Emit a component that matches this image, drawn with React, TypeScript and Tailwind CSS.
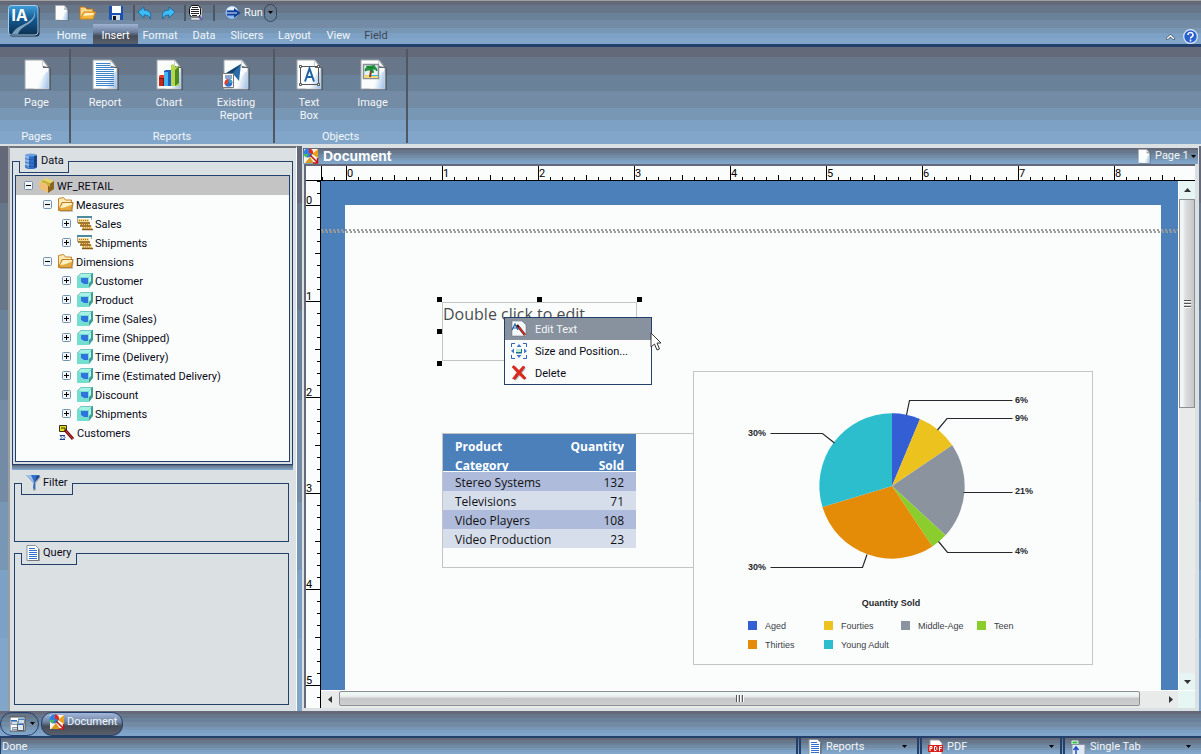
import React, { ReactNode } from "react";

const BANDS =
  "bg-[linear-gradient(#636978_10%,#677789_10%_29%,#6a8299_29%_45%,#748ba5_45%_63%,#7897b5_63%_75%,#7ca1c4_75%_87%,#82a6ca_87%)]";

function PageShape({ id }: { id: string }) {
  return (
    <>
      <defs>
        <linearGradient id={id} x1="0.3" y1="0.6" x2="1" y2="0.8">
          <stop offset="0.1" stopColor="#fbfdfc" />
          <stop offset="1" stopColor="#a4c3e8" />
        </linearGradient>
      </defs>
      <path d="M3 3h18l6 7v21H3z" fill="#3d4a5a" opacity="0.6" />
      <path d="M1 1h18l6 7v22H1z" fill="#fbfdfc" stroke="#a2a5aa" />
      <path d="M24.500 12c-3 1-5 4-7 8-2 2-4 3-8 3v6.500h15z" fill={`url(#${id})`} />
      <path d="M18 1l1 8h7z" fill="#3c424b" opacity="0.8" />
      <path d="M18 1l1 6 5 1z" fill="#fff" />
    </>
  );
}

function BigIcon({ id, children }: { id: string; children?: ReactNode }) {
  return (
    <svg viewBox="-1 0 28 32" className="h-8 w-7" aria-hidden="true">
      <PageShape id={id} />
      {children}
    </svg>
  );
}

function SmallPage({ id, className }: { id: string; className: string }) {
  return (
    <svg viewBox="0 0 28 32" className={className} aria-hidden="true">
      <PageShape id={id} />
    </svg>
  );
}

function LinedPage() {
  return (
    <svg viewBox="0 0 16 16" className="size-4 shrink-0" aria-hidden="true">
      <path d="M2 .500h8.500l3 3v12H2z" fill="#fff" stroke="#8b8f96" />
      <path d="M14 4v12H4" fill="none" stroke="#5b6068" />
      <path d="M4 3.500h6M4 5.500h8M4 7.500h8M4 9.500h8M4 11.500h8M4 13.500h8" stroke="#2f6fd0" />
    </svg>
  );
}

function DocumentIcon() {
  return (
    <svg viewBox="0 0 16 16" className="size-4 shrink-0" aria-hidden="true">
      <path d="M1 1h14v14H1z" fill="#fdf6e4" />
      <path d="M9 6l6-5v9z" fill="#e8a020" />
      <path d="M2 15l5-6 4 6z" fill="#d9981e" />
      <circle cx="5" cy="5" r="4.500" fill="#2f7fe0" />
      <path d="M6 5V0a5 5 0 0 1 4 6z" fill="#e8261c" />
      <path d="M.500 6h5l-2 3.500a5 5 0 0 1-3-3.500z" fill="#47c05a" />
      <path d="M7 7l7 7m.500-4v5H10" fill="none" stroke="#c01818" strokeWidth="1.500" />
    </svg>
  );
}

function Caret({ className = "" }: { className?: string }) {
  return (
    <svg viewBox="0 0 5 3" className={`h-[3px] w-[5px] shrink-0 ${className}`} aria-hidden="true">
      <path d="M0 0h5L2.500 3z" fill="#000" />
    </svg>
  );
}

function Folder() {
  return (
    <svg viewBox="0 0 16 16" className="size-4 shrink-0" aria-hidden="true">
      <path d="M.500 13V1.500l5-1 2 2.500h6v3" fill="#fbe9b8" stroke="#c88428" />
      <path d="M2 15h13l.500-10H6L3 7z" fill="#8c8f96" opacity="0.500" />
      <path d="M.500 13.500L4 5.500h11l-1.500 8z" fill="#e2ab3f" stroke="#c07c1e" />
      <path d="M2 11l3-5h9l-.500 2c-3 0-5 3-11.500 3z" fill="#fdf0c4" />
    </svg>
  );
}

function Measure() {
  return (
    <svg viewBox="0 0 16 16" className="size-4 shrink-0" aria-hidden="true">
      <path d="M0 1h15" stroke="#16657f" strokeWidth="1.500" />
      <path d="M.500 2v5M14.500 2v2" stroke="#9aa8ae" />
      <path d="M1 3h11v4H1z" fill="#f5d78e" />
      <path d="M3 7h10v3H3z" fill="#f0c878" />
      <path d="M5 10h10v3H5z" fill="#f5d78e" />
      <path d="M1 7h12M3 10h11M5 13.500h11" stroke="#8a5a16" strokeWidth="1.500" />
      <path d="M2 4.500h9M4 8.500h8M6 12h8" stroke="#a8741e" strokeDasharray="1 1" />
    </svg>
  );
}

function Cube() {
  return (
    <svg viewBox="0 0 16 16" className="size-4 shrink-0" aria-hidden="true">
      <path d="M0 4l4-4h12v10l-4 5H0z" fill="#3f9f97" />
      <path d="M1 4l3-3.500h11L12 4z" fill="#a6f2e6" />
      <path d="M0 4h12v11H0z" fill="#74dfcf" />
      <path d="M4 5h7v6H4z" fill="#2f74dc" />
      <path d="M4 9l3 2H4z" fill="#7fe0f0" />
      <path d="M12 4l2-2v6l-2 2z" fill="#b9f2ea" />
    </svg>
  );
}

function Box() {
  return (
    <svg viewBox="0 0 16 16" className="size-4 shrink-0" aria-hidden="true">
      <path d="M0 4l7-4 8 3-6 4z" fill="#e6d76a" />
      <path d="M0 4l9 3v8l-8-4z" fill="#f0bf74" />
      <path d="M9 7l6-4v8l-6 4z" fill="#8a6420" />
      <path d="M4 2l7 3v4l-3-2v-1L2 4z" fill="#c9ae3a" />
    </svg>
  );
}

function NamedSet() {
  return (
    <svg viewBox="0 0 16 16" className="size-4 shrink-0" aria-hidden="true">
      <path d="M.500.500h7v6h-7z" fill="#e6dc28" stroke="#33330f" />
      <path d="M2 3h4v3" fill="none" stroke="#33330f" />
      <path d="M6 5l8 9" stroke="#6b0f12" strokeWidth="3" />
      <path d="M7 6l7 8" stroke="#e23a3a" strokeWidth="1" />
      <path d="M1 10.500h5M1 14.500h5M1 10.500l2 2-2 2M4 10.500l2 2-2 2" fill="none" stroke="#1d3f8f" />
    </svg>
  );
}

function Toggle({ open }: { open: boolean }) {
  return (
    <svg viewBox="0 0 9 9" className="size-[9px]" aria-hidden="true">
      <rect x="0.500" y="0.500" width="8" height="8" rx="1" fill="#f2f5f8" stroke="#7591b0" />
      <path d={open ? "M2 4.500h5" : "M2 4.500h5M4.500 2v5"} stroke="#000" />
    </svg>
  );
}

const tree: { depth: number; open: boolean | null; icon: ReactNode; label: string }[] = [
  { depth: 0, open: true, icon: <Box />, label: "WF_RETAIL" },
  { depth: 1, open: true, icon: <Folder />, label: "Measures" },
  { depth: 2, open: false, icon: <Measure />, label: "Sales" },
  { depth: 2, open: false, icon: <Measure />, label: "Shipments" },
  { depth: 1, open: true, icon: <Folder />, label: "Dimensions" },
  { depth: 2, open: false, icon: <Cube />, label: "Customer" },
  { depth: 2, open: false, icon: <Cube />, label: "Product" },
  { depth: 2, open: false, icon: <Cube />, label: "Time (Sales)" },
  { depth: 2, open: false, icon: <Cube />, label: "Time (Shipped)" },
  { depth: 2, open: false, icon: <Cube />, label: "Time (Delivery)" },
  { depth: 2, open: false, icon: <Cube />, label: "Time (Estimated Delivery)" },
  { depth: 2, open: false, icon: <Cube />, label: "Discount" },
  { depth: 2, open: false, icon: <Cube />, label: "Shipments" },
  { depth: 1, open: null, icon: <NamedSet />, label: "Customers" },
];

const INDENT = ["pl-[8px]", "pl-[27px]", "pl-[46px]"];

function Tree() {
  return (
    <ul role="tree" aria-label="Data" className="h-full">
      {tree.map((n, i) => (
        <li
          key={i}
          role="treeitem"
          aria-level={n.depth + 1}
          aria-selected={i === 0}
          className={`flex h-[19px] items-center ${INDENT[n.depth]} ${i === 0 ? "bg-[#c4c4c4]" : ""}`}
        >
          {n.open !== null ? (
            <button className="mr-[6px]" aria-label={n.open ? "Collapse" : "Expand"}>
              <Toggle open={n.open} />
            </button>
          ) : (
            <span className="w-4" />
          )}
          {n.icon}
          <span className="ml-[2px] pt-[2px] whitespace-nowrap">{n.label}</span>
        </li>
      ))}
    </ul>
  );
}

function Panel({ title, icon, className, children }: { title: string; icon: ReactNode; className: string; children?: ReactNode }) {
  return (
    <section className={`flex flex-col border border-[#233f6c] ${className}`}>
      <h2 className="-mt-px ml-[6px] flex h-3 w-max items-end border-x border-b border-[#233f6c] bg-[#dbe0e3] pr-1 pl-[3px] font-normal">
        <span className="flex h-[23px] items-center gap-[2px]">
          {icon}
          {title}
        </span>
      </h2>
      {children}
    </section>
  );
}

const tabs = [
  { label: "Home", w: "w-[43px]" },
  { label: "Insert", w: "w-[45px]" },
  { label: "Format", w: "w-[44px]" },
  { label: "Data", w: "w-[44px]" },
  { label: "Slicers", w: "w-[42px]" },
  { label: "Layout", w: "w-[53px]" },
  { label: "View", w: "w-[35px]" },
  { label: "Field", w: "w-[40px]" },
];

function Separator() {
  return <span className="h-4 w-[2px] bg-[#4f5763]" />;
}

function TitleBar() {
  return (
    <header className={`flex h-11 shrink-0 items-stretch border-t border-[#a0a0a0] ${BANDS}`}>
      <svg viewBox="0 0 34 34" className="mt-[3px] ml-[7px] h-[34px] w-[34px]" role="img" aria-label="InfoAssist">
        <defs>
          <linearGradient id="logo" x1="0" y1="0" x2="0" y2="1">
            <stop offset="0" stopColor="#3f9fdc" />
            <stop offset="0.450" stopColor="#155a92" />
            <stop offset="1" stopColor="#0d3050" />
          </linearGradient>
        </defs>
        <rect x="2.500" y="2.500" width="30" height="30" rx="3" fill="#1c2c40" />
        <rect x="1.500" y="1.500" width="29.500" height="29.500" rx="3" fill="url(#logo)" stroke="#a5cdea" />
        <path d="M24 5c6 4 3 9-3 13-7 4-13 6-16 12h6c2-5 7-8 12-11 6-5 7-10 1-14z" fill="#a9c9e2" opacity="0.700" />
        <text x="4" y="17" fontSize="16" fontWeight="700" fill="#fff" className="font-['Open_Sans',sans-serif]">
          IA
        </text>
      </svg>
      <div className="flex flex-1 flex-col">
        <div className="flex h-[23px] items-center pl-[14px]">
          <button aria-label="New">
            <SmallPage id="new" className="h-4 w-[14px]" />
          </button>
          <button className="ml-[10px]" aria-label="Open">
            <svg viewBox="0 0 17 16" className="h-4 w-[17px]">
              <path d="M1 14V2h5l2 2h6v3" fill="#f8d88c" stroke="#b96d14" />
              <path d="M1 14l4-7h11.500L14 14z" fill="#f3b63c" stroke="#d88a1c" />
              <path d="M4 11l2-3h9l-1 2z" fill="#fff0c0" />
            </svg>
          </button>
          <button className="ml-[13px]" aria-label="Save">
            <svg viewBox="0 0 15 16" className="h-4 w-[15px]">
              <path d="M0 1h14v14H1l-1-1z" fill="#1c50b0" />
              <path d="M3 1h9v7H3z" fill="#fff" />
              <path d="M3 10h8v5H3z" fill="#d7dde5" />
              <path d="M4 11h3v4H4z" fill="#12151c" />
            </svg>
          </button>
          <span className="ml-[9px] flex">
            <Separator />
          </span>
          <button className="ml-[3px]" aria-label="Undo">
            <svg viewBox="0 0 14 14" className="size-[14px]">
              <path d="M0 6l6-5v3c6 0 8 4 6 9 0-3-3-4-6-4v3z" fill="#3cbcf4" stroke="#14609a" strokeWidth="0.800" />
            </svg>
          </button>
          <button className="ml-[9px]" aria-label="Redo">
            <svg viewBox="0 0 14 14" className="size-[14px]">
              <path d="M14 6L8 1v3c-6 0-8 4-6 9 0-3 3-4 6-4v3z" fill="#3cbcf4" stroke="#14609a" strokeWidth="0.800" />
            </svg>
          </button>
          <span className="ml-[9px] flex">
            <Separator />
          </span>
          <button className="ml-[2px]" aria-label="Preview">
            <svg viewBox="0 0 16 16" className="size-4">
              <path d="M3 3h11v12H3z" fill="#dfe3e8" stroke="#666" strokeWidth="0.500" />
              <path d="M10 10l4 5" stroke="#6a5fae" strokeWidth="2.500" />
              <path d="M3.500.500h7l2 3v6l-2 2.500h-7l-2-2.500v-6z" fill="#fff" stroke="#111" />
              <path d="M4 2.500h6M3 4.500h8M3 6.500h8M3 8.500h8M4 10.500h5" stroke="#222" />
            </svg>
          </button>
          <span className="ml-[9px] flex">
            <Separator />
          </span>
          <button className="ml-[10px] flex items-center gap-[3px] text-[#f2f6f8]">
            <svg viewBox="0 0 16 16" className="size-4" aria-hidden="true">
              <circle cx="7" cy="7.500" r="6.500" fill="#8fbcf0" />
              <path d="M1.500 5a6 6 0 0 1 11 0z" fill="#e8f3fd" />
              <path d="M2 5.500h7V3l6.500 5L9 13v-2.500H2z" fill="#123f9a" />
              <path d="M2 8h10" stroke="#dfeefc" />
            </svg>
            Run
          </button>
          <button aria-label="Run options" className="ml-px flex h-[18px] w-[13px] items-center justify-center rounded-full border border-[#31465f]">
            <Caret />
          </button>
        </div>
        <nav className="flex h-5 items-stretch pl-[9px]">
          {tabs.map((t) => (
            <button
              key={t.label}
              className={`${t.w} pt-1 text-center ${
                t.label === "Insert"
                  ? "bg-[linear-gradient(#9fb3d3,#6c7f9f_40%,#454c58_60%,#59606c)] text-white"
                  : t.label === "Field"
                    ? "text-[#3f4654]"
                    : "text-[#f2f6f8]"
              }`}
            >
              {t.label}
            </button>
          ))}
        </nav>
      </div>
      <div className="flex items-end gap-2 pr-[3px]">
        <button aria-label="Collapse ribbon" className="mb-[4px]">
          <svg viewBox="0 0 9 6" className="h-[6px] w-[9px]">
            <path d="M.500 5.500l4-4 4 4" fill="none" stroke="#2f3f55" strokeWidth="2.500" />
            <path d="M1 5l3.500-3.500L8 5" fill="none" stroke="#fff" strokeWidth="1.500" />
          </svg>
        </button>
        <button aria-label="Help">
          <svg viewBox="0 0 15 15" className="size-[15px]">
            <circle cx="7.500" cy="7.500" r="6.800" fill="#2a60cf" stroke="#dfe9f7" strokeWidth="1.200" />
            <path d="M5 6a2.500 2.300 0 1 1 3.500 2c-.800.400-1 .800-1 1.500M7.500 10.500v2" fill="none" stroke="#fff" strokeWidth="1.500" />
          </svg>
        </button>
      </div>
    </header>
  );
}

function RibbonButton({ label, w = "w-16", children }: { label: string; w?: string; children: ReactNode }) {
  return (
    <button className={`flex flex-col items-center text-[#f2f6f8] ${w}`}>
      {children}
      <span className="mt-[5px] w-10 leading-[13px]">{label}</span>
    </button>
  );
}

function RibbonGroup({ label, pad = "px-[2px]", children }: { label: string; pad?: string; children: ReactNode }) {
  return (
    <section className={`mt-[2px] mb-px flex flex-col justify-between border-r-2 border-[#4f5763] pt-[10px] ${pad}`}>
      <div className="flex">{children}</div>
      <h2 className="text-center leading-[13px] font-normal text-[#f2f6f8]">{label}</h2>
    </section>
  );
}

function Ribbon() {
  return (
    <div className={`flex h-[100px] shrink-0 border-t-[3px] border-[#233f6c] ${BANDS}`}>
      <RibbonGroup label="Pages" pad="pl-1">
        <RibbonButton label="Page" w="w-[65px]">
          <BigIcon id="p1" />
        </RibbonButton>
      </RibbonGroup>
      <RibbonGroup label="Reports">
        <RibbonButton label="Report">
          <BigIcon id="p2">
            <path
              d="M4 4.500h14M4 6.500h14M4 8.500h18M4 10.500h18M4 12.500h18M4 14.500h18M4 16.500h18M4 18.500h18M4 20.500h18M4 22.500h18M4 24.500h18M4 26.500h18"
              stroke="#3f83c8"
            />
          </BigIcon>
        </RibbonButton>
        <RibbonButton label="Chart">
          <BigIcon id="p3">
            <path d="M3 17l2-1h5v11H3z" fill="#7d1512" />
            <path d="M3 17l2-1h4v3H3z" fill="#e83a22" />
            <path d="M3 20h4v7H3z" fill="#c3271d" />
            <path d="M8 12l2-1h6v16H8z" fill="#1f5fc0" />
            <path d="M8 13h4v14H8z" fill="#45b8f4" />
            <path d="M15 6l2-1 2 3 4-1v20h-8z" fill="#b5d84a" />
            <path d="M19 11l4-4v17l-4 3z" fill="#4f8a1e" />
          </BigIcon>
        </RibbonButton>
        <RibbonButton label="Existing Report" w="w-[70px]">
          <BigIcon id="p4">
            <path d="M18 5L16 22l-5-6-8-2z" fill="#2a6ba8" />
            <path d="M18 5L2 15l6 1z" fill="#16466f" />
            <path d="M-.500 14.500h11v14h-11z" fill="#fff" stroke="#777" />
            <path d="M2 17h7M2 19h7" stroke="#1d4f9a" />
            <circle cx="5.500" cy="24" r="3.800" fill="#2f6fd0" />
            <path d="M5.500 24v-4a4 4 0 0 1 4 4z" fill="#35a0d0" />
            <path d="M5.500 24l-3.500 2a4 4 0 0 1 3.500-6z" fill="#e0452c" />
          </BigIcon>
        </RibbonButton>
      </RibbonGroup>
      <RibbonGroup label="Objects">
        <RibbonButton label="Text Box" w="w-16 px-4">
          <BigIcon id="p5">
            <path d="M4.500 7.500h18v18h-18z" fill="none" stroke="#555" />
            <path d="M3.500 6.500h2v2h-2zM21.500 6.500h2v2h-2zM3.500 24.500h2v2h-2zM21.500 24.500h2v2h-2z" fill="#fff" stroke="#555" />
            <path d="M9 22.500l4.500-13 4.500 13M10.500 18h6" fill="none" stroke="#1f62a8" strokeWidth="2" />
          </BigIcon>
        </RibbonButton>
        <RibbonButton label="Image" w="w-[63px]">
          <BigIcon id="p6">
            <path d="M3.500 5.500h15v14h-15z" fill="#dff2f6" stroke="#8a8f96" strokeWidth="1.500" />
            <path d="M4 16h14v3H4z" fill="#f0d878" />
            <path d="M11 16.500h7" stroke="#35b8e0" />
            <path d="M10 18l1.500-9" stroke="#8a3f18" strokeWidth="2" />
            <path d="M5 12c0-4 3-5 6-3 3-3 6-1 6 3-2-2-3-2-5-2 1 1 2 2 1 4-1-2-2-3-3-3-2 0-3 0-5 1zM6 7l5 2 4-3" fill="#1fa03c" stroke="#147028" strokeWidth="0.800" />
          </BigIcon>
        </RibbonButton>
      </RibbonGroup>
    </div>
  );
}

const range = (n: number) => Array.from({ length: n }, (_, i) => i);

const tickLength = (n: number) => (n % 8 === 0 ? 15 : n % 4 === 0 ? 5 : 3);

function HorizontalRuler() {
  return (
    <svg className="h-[15px] min-w-0 flex-1 border-b border-l border-black bg-[#fbfdfc]" aria-hidden="true">
      {range(72).map((i) => (
        <path key={i} d={`M${0.5 + i * 12} 14v-${tickLength(i - 2)}`} stroke="#000" />
      ))}
      {range(9).map((i) => (
        <text key={i} x={25 + i * 96} y="11" fontSize="11">
          {i}
        </text>
      ))}
    </svg>
  );
}

function VerticalRuler() {
  return (
    <svg className="w-[15px] shrink-0 border-r border-black bg-[#fbfdfc]" aria-hidden="true">
      {range(100).map((i) => (
        <path key={i} d={`M14 ${0.5 + i * 12}h-${tickLength(i - 2)}`} stroke="#000" />
      ))}
      {range(6).map((i) => (
        <text key={i} x="0" y={23 + i * 96} fontSize="11">
          {i}
        </text>
      ))}
    </svg>
  );
}

const legend = [
  { x: 748, y: 621, c: "#345ed4", t: "Aged" },
  { x: 824, y: 621, c: "#ecc31e", t: "Fourties" },
  { x: 901, y: 621, c: "#8b939f", t: "Middle-Age" },
  { x: 977, y: 621, c: "#8ccd2e", t: "Teen" },
  { x: 748, y: 640, c: "#e48b07", t: "Thirties" },
  { x: 824, y: 640, c: "#2dbecd", t: "Young Adult" },
];

const shares = [
  { x: 1015, y: 403, t: "6%" },
  { x: 1015, y: 421, t: "9%" },
  { x: 1015, y: 494, t: "21%" },
  { x: 1015, y: 554, t: "4%" },
  { x: 748, y: 436, t: "30%" },
  { x: 748, y: 570, t: "30%" },
];

function PieChart() {
  return (
    <svg viewBox="694 372 398 292" className="h-[292px] w-[398px] font-['Liberation_Sans',sans-serif]" role="img" aria-label="Quantity Sold by age group">
      <path d="M892 486V413.300A72.700 72.700 0 0 1 920 419z" fill="#345ed4" />
      <path d="M892 486L920 419A72.700 72.700 0 0 1 952.200 445.300z" fill="#ecc31e" />
      <path d="M892 486L952.200 445.300A72.700 72.700 0 0 1 945.500 535.200z" fill="#8b939f" />
      <path d="M892 486L945.500 535.200A72.700 72.700 0 0 1 932.400 546.400z" fill="#8ccd2e" />
      <path d="M892 486L932.400 546.400A72.700 72.700 0 0 1 822.400 506.900z" fill="#e48b07" />
      <path d="M892 486L822.400 506.900A72.700 72.700 0 0 1 892 413.300z" fill="#2dbecd" />
      <path
        d="M906.500 415l3-14.500h103M937.500 430l9.500-11.500h65.500M963.500 492.500h49M938.500 541.500l9 11h65M834.500 443l-12-9.500h-52M867 554.500l-4.500 13h-92"
        fill="none"
        stroke="#26282c"
        strokeWidth="1.200"
      />
      {shares.map((s, i) => (
        <text key={i} x={s.x} y={s.y} fontSize="9" fontWeight="700" fill="#26282c">
          {s.t}
        </text>
      ))}
      <text x="891" y="606" fontSize="9" fontWeight="700" textAnchor="middle" fill="#26282c">
        Quantity Sold
      </text>
      {legend.map((l) => (
        <g key={l.t}>
          <rect x={l.x} y={l.y} width="9" height="9" fill={l.c} />
          <text x={l.x + 17} y={l.y + 8} fontSize="9" fill="#3c4048">
            {l.t}
          </text>
        </g>
      ))}
    </svg>
  );
}

const rows = [
  ["Stereo Systems", "132"],
  ["Televisions", "71"],
  ["Video Players", "108"],
  ["Video Production", "23"],
];

const HANDLES = [
  "-left-[6px] -top-[6px]",
  "left-[94px] -top-[6px]",
  "left-[194px] -top-[6px]",
  "-left-[6px] top-[26px]",
  "-left-[6px] top-[58px]",
];

function ContextMenu() {
  const item = "flex h-[22px] w-full items-center gap-[8px] pl-[6px] text-left";
  const text = "pt-[2px]";
  return (
    <div role="menu" className="absolute top-[136px] left-[183px] w-[148px] border border-[#233f6c] bg-[#fbfdfc]">
      <button role="menuitem" className={`${item} bg-[#88929f] text-[#f2f6f8]`}>
        <svg viewBox="0 0 16 16" className="size-4" aria-hidden="true">
          <path d="M1 0h10l4 4v11H1z" fill="#f6f9fc" stroke="#5c6570" strokeWidth="0.500" />
          <path d="M1 9L4 3l3 6M2 7h4" fill="none" stroke="#1f5fa8" strokeWidth="1.200" />
          <path d="M6 4l8 10" stroke="#401214" strokeWidth="2.500" />
          <path d="M8 6l6 8" stroke="#d8302a" strokeWidth="1.500" />
        </svg>
        <span className={text}>Edit Text</span>
      </button>
      <button role="menuitem" className={item}>
        <svg viewBox="0 0 16 16" className="size-4" aria-hidden="true">
          <path d="M.500 4V.500H4M12 .500h3.500V4M.500 12v3.500H4M12 15.500h3.500V12" fill="none" stroke="#2f62c0" strokeWidth="1" />
          <path d="M8 1l2.500 3h-5zM8 15l2.500-3h-5zM0 8l3-2.500v5zM16 8l-3-2.500v5z" fill="#3f78cc" />
          <path d="M5 6h6v4.500H5z" fill="#1f6f8f" />
          <path d="M5 6h5v3H5z" fill="#bfe8d0" />
        </svg>
        <span className={text}>Size and Position...</span>
      </button>
      <button role="menuitem" className={item}>
        <svg viewBox="0 0 16 16" className="size-4" aria-hidden="true">
          <path d="M4 3l11 11M14 3L4 15" stroke="#7a8088" strokeWidth="2" opacity="0.500" />
          <path d="M1 2l2-1.500 5 5 4-4.500 2 1-4 5.500 5 5.500-2 1.500-5-5-4 5-2.500-1L6 7.500z" fill="#e0281c" stroke="#b01810" strokeWidth="0.500" />
        </svg>
        <span className={text}>Delete</span>
      </button>
    </div>
  );
}

function MarginLine() {
  return (
    <svg className="absolute inset-x-0 top-12 h-1 w-full" aria-hidden="true">
      <defs>
        <pattern id="weave" width="4" height="4" patternUnits="userSpaceOnUse">
          <path d="M0 0h2v2H0zM1 2h2v2H1z" fill="#9b9b9b" />
        </pattern>
      </defs>
      <rect width="100%" height="4" fill="url(#weave)" />
    </svg>
  );
}

function Canvas() {
  return (
    <div className="relative min-w-0 flex-1 overflow-hidden bg-[#4b80bb]">
      <div className="absolute top-6 bottom-0 left-6 w-[816px] bg-[#fbfdfc]" />
      <MarginLine />

      <div className="absolute top-[121px] left-[121px] h-[59px] w-[195px] border border-[#c4c4c4] font-['Open_Sans',sans-serif] text-base leading-[22px] whitespace-nowrap text-[#4a4d50]">
        Double click to edit
        {HANDLES.map((h) => (
          <span key={h} className={`absolute size-[5px] bg-black ${h}`} />
        ))}
      </div>

      <div className="absolute top-[252px] left-[121px] h-[135px] w-[600px] border border-[#c4c4c4] font-['Open_Sans',sans-serif] text-[12px]">
        <table className="w-[193px] border-collapse text-[#111]">
          <thead>
            <tr className="border-b border-white bg-[#4b80bb] align-top leading-[19px] font-semibold text-white">
              <th className="pt-[3px] pl-3 text-left align-top">
                <div className="h-[34px] w-16 overflow-hidden">Product Category</div>
              </th>
              <th className="pt-[3px] pr-3 text-right align-top">
                <div className="ml-auto h-[34px] w-16 overflow-hidden">Quantity Sold</div>
              </th>
            </tr>
          </thead>
          <tbody>
            {rows.map(([name, qty]) => (
              <tr key={name} className="leading-[16px] odd:bg-[#aebbda] even:bg-[#d6deec]">
                <td className="pt-[3px] pl-3">{name}</td>
                <td className="pt-[3px] pr-3 text-right">{qty}</td>
              </tr>
            ))}
          </tbody>
        </table>
      </div>

      <div className="absolute top-[190px] left-[372px] border border-[#c4c4c4] bg-[#fbfdfc]">
        <PieChart />
      </div>

      <ContextMenu />
      <svg viewBox="0 0 12 20" className="absolute top-[151px] left-[329px] h-5 w-3" aria-hidden="true">
        <path d="M1 1v14l3.500-3 2.500 6 2.500-1-2.500-6H11z" fill="#fff" stroke="#333" />
      </svg>
    </div>
  );
}

function ArrowGlyph({ d }: { d: string }) {
  return (
    <svg viewBox="0 0 7 7" className="size-[7px]" aria-hidden="true">
      <path d={d} fill="#333" />
    </svg>
  );
}

function Workspace() {
  return (
    <main className="mr-[2px] flex min-w-0 flex-1 flex-col bg-[#dbe0e3]">
      <div className={`mt-[2px] mr-px ml-px flex h-4 items-center ${BANDS}`}>
        <DocumentIcon />
        <h1 className="ml-1 flex-1 font-['Liberation_Sans',sans-serif] text-[14px] leading-4 font-bold text-white">Document</h1>
        <SmallPage id="pg" className="h-[15px] w-[13px]" />
        <label className="ml-1 flex items-center text-[#f2f6f8]">
          <select aria-label="Current page" className="w-[36px] appearance-none bg-transparent leading-4">
            <option>Page 1</option>
          </select>
          <Caret className="mr-[2px]" />
        </label>
      </div>
      <div className="mr-1 mb-[3px] ml-[2px] flex min-h-0 flex-1 flex-col border-t-2 border-l-2 border-[#636978]">
        <div className="flex shrink-0 bg-[#fbfdfc]">
          <span className="w-[15px] border-b border-black" />
          <HorizontalRuler />
        </div>
        <div className="flex min-h-0 flex-1">
          <VerticalRuler />
          <div className="flex min-w-0 flex-1 flex-col">
            <div className="flex min-h-0 flex-1">
              <Canvas />
              <div className="flex w-[17px] shrink-0 flex-col border-l border-white bg-[#e9ebeb]">
                <button aria-label="Scroll up" className="flex h-[18px] items-center justify-center bg-[#e6f4f3]">
                  <ArrowGlyph d="M0 5l3.500-4L7 5z" />
                </button>
                <div className="flex h-[209px] items-center justify-center border border-[#8c8f92] bg-[linear-gradient(90deg,#f2f5f5_20%,#dcdedf_40%,#c4c6c8)]">
                  <span className="h-2 w-[7px] bg-[repeating-linear-gradient(#555_0_1px,#fff_1px_2px,#ccc_2px_3px)]" />
                </div>
                <button aria-label="Scroll down" className="mt-auto flex h-[17px] items-center justify-center bg-[#e6f4f3]">
                  <ArrowGlyph d="M0 2l3.500 4L7 2z" />
                </button>
              </div>
            </div>
            <div className="flex h-[18px] shrink-0 border-t border-white bg-[#e9ebeb]">
              <button aria-label="Scroll left" className="flex w-[18px] items-center justify-center">
                <ArrowGlyph d="M5 0L1 3.500 5 7z" />
              </button>
              <div className="mb-[2px] flex flex-1 items-center justify-center rounded-[2px] border border-[#8c8f92] bg-[linear-gradient(#eef6f4_20%,#e2e4e4_40%,#c4c6c8_50%,#cdcfd0)]">
                <span className="h-[7px] w-2 bg-[repeating-linear-gradient(90deg,#555_0_1px,#fff_1px_2px,#ccc_2px_3px)]" />
              </div>
              <button aria-label="Scroll right" className="ml-[23px] flex w-[15px] items-center justify-center">
                <ArrowGlyph d="M2 0l4 3.500L2 7z" />
              </button>
              <span className="w-[17px] bg-[#e6f6f3]" />
            </div>
          </div>
        </div>
      </div>
    </main>
  );
}

function Sidebar() {
  return (
    <aside className="ml-2 flex w-[289px] shrink-0 flex-col border-t-2 border-r border-l-2 border-t-[#70757c] border-r-white border-l-[#9a9ea3] bg-[#dbe0e3] pr-[3px] pb-[6px]">
      <Panel
        title="Data"
        className="mt-[13px] ml-[2px] h-[304px]"
        icon={
          <svg viewBox="0 0 16 16" className="size-4" aria-hidden="true">
            <path d="M2 2h12v12a6 2 0 0 1-12 0z" fill="#2f6fc8" />
            <path d="M2 2h4v13l-4-2z" fill="#8fb8ea" />
            <path d="M11 2h3v12l-3 1z" fill="#173f86" />
            <path d="M2 5.500c3 1.500 9 1.500 12 0M2 9c3 1.500 9 1.500 12 0M2 12.500c3 1.500 9 1.500 12 0" fill="none" stroke="#2a5598" strokeWidth="0.700" />
            <ellipse cx="8" cy="2" rx="6" ry="1.500" fill="#6f9fe0" />
          </svg>
        }
      >
        <div className="mx-[2px] mt-[2px] mb-[2px] flex-1 border border-[#233f6c] bg-[#fbfdfc]">
          <Tree />
        </div>
      </Panel>
      <div className={`ml-[2px] h-[5px] shrink-0 ${BANDS}`} />
      <Panel
        title="Filter"
        className="mt-[13px] mr-1 ml-1 h-[59px]"
        icon={
          <svg viewBox="0 0 16 16" className="size-4" aria-hidden="true">
            <path d="M3 2h13l-5 6v7l-3 1V8z" fill="#777" opacity="0.500" />
            <path d="M1 0h14L10 7v8l-2-2V7z" fill="#2f6fc8" />
            <path d="M1 0h5l3 7v6L8 7z" fill="#9cc0ea" />
            <path d="M12 1h3L10 7z" fill="#163f8a" />
          </svg>
        }
      />
      <Panel title="Query" className="mt-[11px] mr-1 ml-1 flex-1" icon={<LinedPage />} />
    </aside>
  );
}

function StatusSelect({ label, icon, w, caret = "mr-[10px]" }: { label: string; icon: ReactNode; w: string; caret?: string }) {
  return (
    <label className={`ml-px flex shrink-0 items-center border-l-2 border-[#233f6c] pt-px pl-[6px] ${w}`}>
      {icon}
      <select aria-label={label} className="ml-[3px] flex-1 appearance-none bg-transparent pt-px leading-4">
        <option>{label}</option>
      </select>
      <Caret className={caret} />
    </label>
  );
}

export default function App() {
  return (
    <div className="flex h-screen min-h-[600px] flex-col overflow-hidden bg-[#dbe0e3] font-['Roboto','Noto_Sans',sans-serif] text-[11px] leading-[14px] text-[#0a0a18]">
      <TitleBar />
      <Ribbon />
      <div className={`mt-[2px] flex min-h-0 flex-1 ${BANDS}`}>
        <Sidebar />
        <div className="w-[5px] shrink-0" />
        <Workspace />
      </div>
      <div className={`flex h-[25px] shrink-0 items-center gap-[2px] ${BANDS}`}>
        <button aria-label="Windows" className="flex h-6 w-[39px] items-center justify-end gap-1 rounded-full border border-[#233f6c] pr-[3px]">
          <svg viewBox="0 0 16 16" className="size-4" aria-hidden="true">
            <path d="M0 1h15v14H0z" fill="#fff" stroke="#555" />
            <path d="M1.500 5.500h6v3h-6zM2.500 11.500h5v2h-5zM8.500 3.500h6v4h-6z" fill="#cfe0f3" stroke="#4a5a70" strokeWidth="0.600" />
            <path d="M7.500 8.500h6v6h-6z" fill="#dbe9f8" stroke="#222" strokeWidth="0.700" />
            <path d="M1 4.500h6M8 3h6M8 8.500h5" stroke="#1f6fd0" />
          </svg>
          <Caret />
        </button>
        <button className="flex h-6 w-[82px] items-center gap-[2px] rounded-[11px] border border-[#233f6c] bg-[linear-gradient(#a3b8d8,#7186a6_40%,#454c58_60%,#59606c)] pb-[3px] pl-[7px] text-[#f2f6f8]">
          <DocumentIcon />
          Document
        </button>
      </div>
      <footer className={`flex h-[18px] shrink-0 border-t-2 border-[#233f6c] text-[#f2f6f8] ${BANDS}`}>
        <div className="flex-1 border-r-2 border-l border-[#233f6c] pl-px leading-[18px]">Done</div>
        <StatusSelect label="Reports" icon={<LinedPage />} w="w-[120px] border-r-2" />
        <StatusSelect
          label="PDF"
          w="w-[142px] border-r-2"
          caret="mr-[6px]"
          icon={
            <svg viewBox="0 0 16 16" className="size-4" aria-hidden="true">
              <path d="M2 1h9l3 3v12H2z" fill="#fff" stroke="#999" />
              <path d="M0 6h15v7H0z" fill="#d81f1a" />
              <path d="M2 12V7.500h2v2H2M6.500 7.500v4h1.500l.800-1V8.500l-.800-1zM11.500 12V7.500h2.500M11.500 9.500h2" fill="none" stroke="#fff" />
            </svg>
          }
        />
        <StatusSelect
          label="Single Tab"
          w="w-[138px]"
          icon={
            <svg viewBox="0 0 16 16" className="size-4" aria-hidden="true">
              <path d="M1 2h6v3H1z" fill="#35c04a" stroke="#e8f4ea" />
              <path d="M1 5.500h13v10H1z" fill="#dfe9f4" stroke="#8a93a0" />
              <path d="M5 15V9M2.500 11L5 8l2.500 3" fill="none" stroke="#1f4fc0" strokeWidth="1.500" />
            </svg>
          }
        />
      </footer>
    </div>
  );
}
